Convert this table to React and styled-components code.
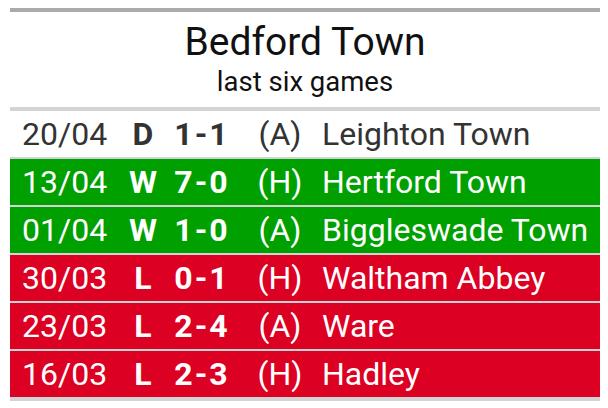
import React from "react";
import styled, { createGlobalStyle } from "styled-components";

const Global = createGlobalStyle`
  html, body { margin: 0; padding: 0; background: #fff; }
  body { font-family: Roboto, "Liberation Sans", sans-serif; }
`;

const Page = styled.div`
  padding: 8px 8px 0 10px;
`;

const Card = styled.div`
  display: flex;
  flex-direction: column;
  width: 590px;
`;

const Rule = styled.div`
  height: ${(p) => p.$h || 4}px;
  background: ${(p) => p.$color || "#d3d3d3"};
`;

const Header = styled.div`
  height: 95px;
  box-sizing: border-box;
  padding-top: 7px;
  display: flex;
  flex-direction: column;
  align-items: center;
  color: #111;
`;

const Title = styled.div`
  font-size: 39px;
  line-height: 46px;
`;

const Subtitle = styled.div`
  font-size: 27.5px;
  line-height: 32px;
  margin-top: 1px;
`;

const Row = styled.div`
  display: grid;
  grid-template-columns: 100px 42px 74px 84px 1fr;
  align-items: center;
  height: 46px;
  line-height: 46px;
  padding-left: 12px;
  font-size: 32px;
  white-space: nowrap;
  border-top: ${(p) => (p.$first ? "none" : "2px solid #d3d3d3")};
  background: ${(p) =>
    p.$res === "W" ? "#00a000" : p.$res === "L" ? "#dc0023" : "#fff"};
  color: ${(p) => (p.$res === "D" ? "#333" : "#fff")};
`;

const Cell = styled.span`
  text-align: ${(p) => p.$align || "left"};
  font-weight: ${(p) => (p.$bold ? 700 : 400)};
  letter-spacing: ${(p) => p.$spacing || 0}px;
  margin-right: ${(p) => -(p.$spacing || 0)}px;
`;

const games = [
  { date: "20/04", res: "D", score: "1-1", venue: "(A)", team: "Leighton Town" },
  { date: "13/04", res: "W", score: "7-0", venue: "(H)", team: "Hertford Town" },
  { date: "01/04", res: "W", score: "1-0", venue: "(A)", team: "Biggleswade Town" },
  { date: "30/03", res: "L", score: "0-1", venue: "(H)", team: "Waltham Abbey" },
  { date: "23/03", res: "L", score: "2-4", venue: "(A)", team: "Ware" },
  { date: "16/03", res: "L", score: "2-3", venue: "(H)", team: "Hadley" },
];

export default function App() {
  return (
    <Page>
      <Global />
      <Card>
        <Rule $color="#aaaaaa" />
        <Header>
          <Title>Bedford Town</Title>
          <Subtitle>last six games</Subtitle>
        </Header>
        <Rule />
        {games.map((g, i) => (
          <Row key={g.date} $res={g.res} $first={i === 0}>
            <Cell>{g.date}</Cell>
            <Cell $align="center" $bold>{g.res}</Cell>
            <Cell $align="center" $bold $spacing={2}>{g.score}</Cell>
            <Cell $align="center">{g.venue}</Cell>
            <Cell>{g.team}</Cell>
          </Row>
        ))}
        <Rule />
      </Card>
    </Page>
  );
}
